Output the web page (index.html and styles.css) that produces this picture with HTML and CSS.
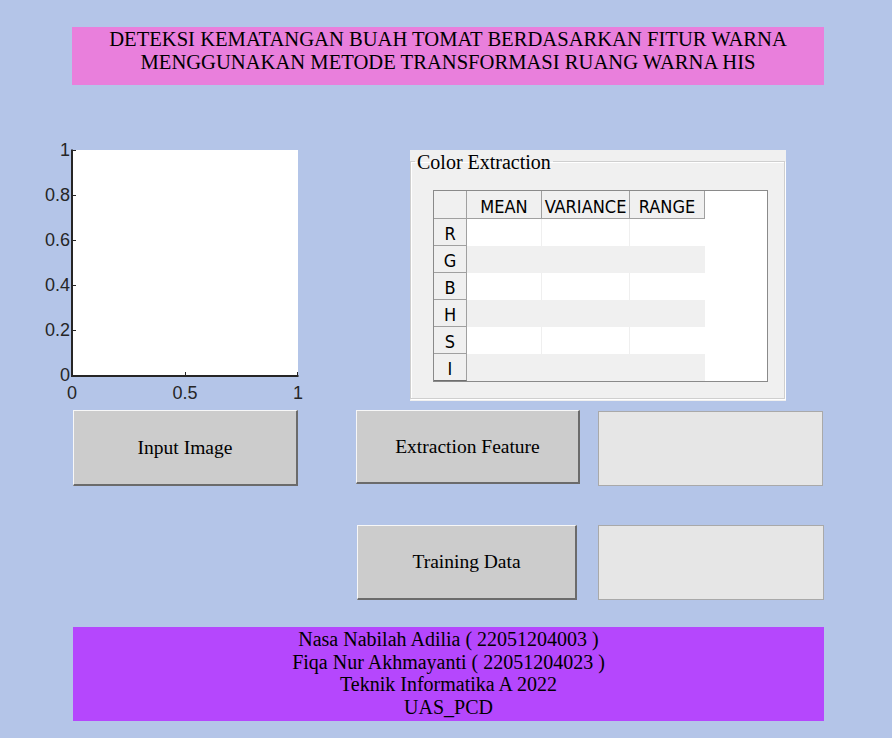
FILE: index.html
```html
<!DOCTYPE html>
<html>
<head>
<meta charset="utf-8">
<title>Deteksi Kematangan Buah Tomat</title>
<link rel="stylesheet" href="styles.css">
</head>
<body>
<div class="app">
  <header class="title">DETEKSI KEMATANGAN BUAH TOMAT BERDASARKAN FITUR WARNA<br>MENGGUNAKAN METODE TRANSFORMASI RUANG WARNA HIS</header>

  <div class="upper">
    <svg class="axes" width="262" height="260" viewBox="0 0 262 260">
      <rect x="32" y="10" width="226" height="226" fill="#ffffff"/>
      <line x1="32" y1="9.5" x2="32" y2="237" stroke="#262626" stroke-width="2"/>
      <line x1="31" y1="236" x2="258.5" y2="236" stroke="#262626" stroke-width="2"/>
      <g stroke="#262626" stroke-width="1">
        <line x1="33" y1="10.5" x2="36" y2="10.5"/>
        <line x1="33" y1="55.5" x2="36" y2="55.5"/>
        <line x1="33" y1="100.5" x2="36" y2="100.5"/>
        <line x1="33" y1="145.5" x2="36" y2="145.5"/>
        <line x1="33" y1="190.5" x2="36" y2="190.5"/>
        <line x1="145.5" y1="235" x2="145.5" y2="232"/>
        <line x1="257.5" y1="235" x2="257.5" y2="232"/>
      </g>
      <g class="ticklabels" text-anchor="end">
        <text x="30" y="16">1</text>
        <text x="30" y="61">0.8</text>
        <text x="30" y="106">0.6</text>
        <text x="30" y="151">0.4</text>
        <text x="30" y="196">0.2</text>
        <text x="30" y="241">0</text>
      </g>
      <g class="ticklabels" text-anchor="middle">
        <text x="32" y="259">0</text>
        <text x="145" y="259">0.5</text>
        <text x="258" y="259">1</text>
      </g>
    </svg>

    <div class="panel">
      <fieldset class="group">
        <legend>Color Extraction</legend>
        <div class="table-wrap">
          <div class="grid">
            <div class="hd corner"></div>
            <div class="hd">MEAN</div>
            <div class="hd">VARIANCE</div>
            <div class="hd">RANGE</div>

            <div class="rh">R</div>
            <div class="cell odd"></div><div class="cell odd"></div><div class="cell odd last"></div>

            <div class="rh">G</div>
            <div class="cell even"></div><div class="cell even"></div><div class="cell even last"></div>

            <div class="rh">B</div>
            <div class="cell odd"></div><div class="cell odd"></div><div class="cell odd last"></div>

            <div class="rh">H</div>
            <div class="cell even"></div><div class="cell even"></div><div class="cell even last"></div>

            <div class="rh">S</div>
            <div class="cell odd"></div><div class="cell odd"></div><div class="cell odd last"></div>

            <div class="rh rh-last">I</div>
            <div class="cell even"></div><div class="cell even"></div><div class="cell even last"></div>
          </div>
        </div>
      </fieldset>
    </div>
  </div>

  <div class="row row-a">
    <button class="btn btn-input">Input Image</button>
    <button class="btn btn-extract">Extraction Feature</button>
    <div class="display display-a"></div>
  </div>

  <div class="row row-b">
    <button class="btn btn-train">Training Data</button>
    <div class="display display-b"></div>
  </div>

  <footer class="credits">
    <div>Nasa Nabilah Adilia ( 22051204003 )</div>
    <div>Fiqa Nur Akhmayanti ( 22051204023 )</div>
    <div>Teknik Informatika A 2022</div>
    <div>UAS_PCD</div>
  </footer>
</div>
</body>
</html>
```

FILE: styles.css
```css
html, body {
  margin: 0;
  padding: 0;
  background: #b4c5e8;
}

body {
  width: 892px;
  height: 738px;
  overflow: hidden;
  font-family: "Liberation Serif", "Times New Roman", serif;
  color: #000;
}

.app {
  padding-top: 27px;
}

.title {
  margin-left: 72px;
  width: 752px;
  height: 58px;
  box-sizing: border-box;
  padding-top: 1px;
  background: #e97fdc;
  text-align: center;
  font-size: 20.6px;
  line-height: 23px;
}

.upper {
  display: flex;
  align-items: flex-start;
  margin-top: 55px;
  height: 261px;
}

.axes {
  margin-left: 40px;
  overflow: visible;
  flex: none;
}

.ticklabels {
  font-family: "Liberation Sans", Arial, sans-serif;
  font-size: 18px;
  fill: #262626;
}

.panel {
  margin-top: 10px;
  margin-left: 108px;
  width: 376px;
  height: 251px;
  box-sizing: border-box;
  padding: 0 1px 2px 0;
  background: #f0f0f0;
  flex: none;
}

.group {
  margin: 0;
  padding: 0;
  height: 100%;
  box-sizing: border-box;
  border: 1px solid #cfcfcf;
  box-shadow: inset 1px 1px 0 #ffffff, 1px 1px 0 #ffffff;
}

.group legend {
  margin-left: 4px;
  padding: 0 2px;
  font-family: "Liberation Serif", "Times New Roman", serif;
  font-size: 20px;
  line-height: 23px;
  position: relative;
  top: 1px;
}

.table-wrap {
  margin-top: 17px;
  margin-left: 22px;
  width: 335px;
  height: 192px;
  box-sizing: border-box;
  border: 1px solid #8a8a8a;
  background: #ffffff;
}

.grid {
  display: grid;
  grid-template-columns: 33px 75px 88px 75px;
  grid-template-rows: 28px repeat(6, 27px);
  font-family: "DejaVu Sans Condensed", "DejaVu Sans", sans-serif;
  font-stretch: condensed;
  font-size: 18px;
  color: #000;
}

.hd,
.rh {
  box-sizing: border-box;
  background: #f0f0f0;
  border-right: 1px solid #a0a0a0;
  border-bottom: 1px solid #a0a0a0;
  display: flex;
  align-items: center;
  justify-content: center;
  line-height: 1;
  padding-top: 4px;
}

.rh-last {
  border-bottom-color: #6f6f6f;
}

.cell {
  box-sizing: border-box;
}

.cell.odd {
  background: #ffffff;
  border-right: 1px solid #efefef;
}

.cell.even {
  background: #f0f0f0;
}

.cell.last {
  border-right: none;
}

.row {
  display: flex;
  align-items: flex-start;
}

.row-a {
  margin-top: 9px;
  margin-left: 73px;
  height: 76px;
}

.row-b {
  margin-top: 39px;
  margin-left: 357px;
  height: 76px;
}

.btn {
  box-sizing: border-box;
  margin: 0;
  padding: 0;
  background: #cccccc;
  border-style: solid;
  border-width: 1px 2px 2px 1px;
  border-color: #f7f7f7 #6b6b6b #6b6b6b #f7f7f7;
  font-family: "Liberation Serif", "Times New Roman", serif;
  font-size: 19.5px;
  color: #000;
  flex: none;
}

.btn-input {
  width: 225px;
  height: 76px;
}

.btn-extract {
  margin-left: 58px;
  width: 224px;
  height: 74px;
}

.btn-train {
  width: 220px;
  height: 75px;
}

.display {
  box-sizing: border-box;
  background: #e6e6e6;
  border: 1px solid #a9a9a9;
  flex: none;
}

.display-a {
  margin-left: 18px;
  margin-top: 1px;
  width: 225px;
  height: 75px;
}

.display-b {
  margin-left: 21px;
  width: 226px;
  height: 75px;
}

.credits {
  margin-top: 26px;
  margin-left: 73px;
  width: 751px;
  height: 94px;
  box-sizing: border-box;
  padding-top: 1px;
  background: #b547fd;
  text-align: center;
  font-size: 20px;
  line-height: 22.5px;
}
```
